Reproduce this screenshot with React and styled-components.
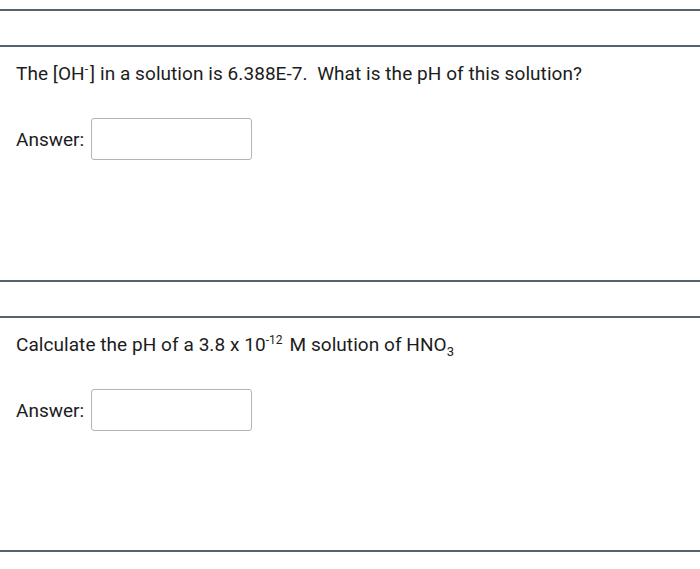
import styled, { createGlobalStyle } from 'styled-components';

const Global = createGlobalStyle`
  body {
    margin: 0;
    background: #ffffff;
    font-family: Roboto, "Liberation Sans", sans-serif;
    color: #222;
  }
`;

const Page = styled.div`
  padding-top: 9px;
  display: flex;
  flex-direction: column;
`;

const Spacer = styled.div`
  height: 34px;
  border-top: 2px solid #56636d;
  border-bottom: 2px solid #56636d;
`;

const Question = styled.section`
  height: ${p => p.$h}px;
  padding: 16px 16px 0;
  box-sizing: border-box;
  display: flex;
  flex-direction: column;
`;

const Prompt = styled.p`
  margin: 0;
  font-size: 19px;
  line-height: 22px;
  letter-spacing: 0.06px;
  color: #1c1c1c;

  sup {
    font-size: 12px;
    vertical-align: 7px;
    line-height: 0;
    margin-right: 2px;
  }
  sub {
    font-size: 13px;
    vertical-align: -5px;
    line-height: 0;
  }
`;

const AnswerRow = styled.label`
  display: flex;
  align-items: center;
  gap: 7px;
  margin-top: ${p => p.$gap}px;
  font-size: 19px;
  color: #1c1c1c;
`;

const Box = styled.input`
  width: 161px;
  height: 42px;
  box-sizing: border-box;
  border: 1.5px solid #b3b3b3;
  border-radius: 3px;
  outline: none;
  background: #fff;
`;

export default function App() {
  return (
    <>
      <Global />
      <Page>
        <Spacer />
        <Question $h={233}>
          <Prompt>
            The [OH<sup>-</sup>] in a solution is 6.388E-7.&nbsp; What is the pH of this solution?
          </Prompt>
          <AnswerRow $gap={33}>
            Answer: <Box type="text" />
          </AnswerRow>
        </Question>
        <Spacer />
        <Question $h={232}>
          <Prompt>
            Calculate the pH of a 3.8 x 10<sup>-12</sup> M solution of HNO<sub>3</sub>
          </Prompt>
          <AnswerRow $gap={33}>
            Answer: <Box type="text" />
          </AnswerRow>
        </Question>
        <Spacer />
      </Page>
    </>
  );
}
